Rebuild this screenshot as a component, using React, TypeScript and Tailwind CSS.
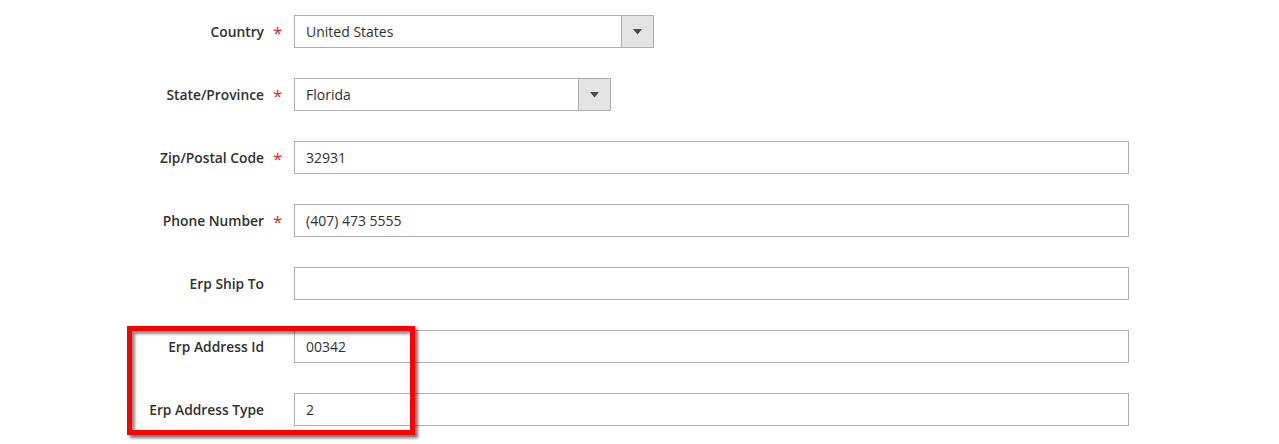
import React from "react";

const font = { fontFamily: '"Open Sans", "Noto Sans", sans-serif' };

function Row({ label, required, children }: { label: string; required?: boolean; children: React.ReactNode }) {
  return (
    <div className="flex items-center h-[33px]">
      <div className="relative w-[294px] shrink-0 h-full flex items-center justify-end pr-[30px]">
        <span className="text-[13.8px] font-semibold text-[#303030] leading-none">{label}</span>
        {required && (
          <span className="absolute left-[273px] top-[9px] text-[17px] leading-none text-[#e22626]">*</span>
        )}
      </div>
      {children}
    </div>
  );
}

function Input({ value, w }: { value: string; w: string }) {
  return (
    <div className={`${w} h-[33px] border border-[#adadad] bg-white flex items-center pl-[11px] text-[14px] text-[#303030]`}>
      {value}
    </div>
  );
}

function Select({ value, w }: { value: string; w: string }) {
  return (
    <div className={`${w} h-[33px] border border-[#adadad] bg-white flex items-stretch text-[14px] text-[#303030]`}>
      <div className="flex-1 flex items-center pl-[11px]">{value}</div>
      <div className="w-[32px] bg-[#e3e3e3] border-l border-[#adadad] flex items-center justify-center">
        <svg width="9" height="6" viewBox="0 0 9 6">
          <polygon points="0,0 9,0 4.5,5.5" fill="#514943" />
        </svg>
      </div>
    </div>
  );
}

export default function App() {
  return (
    <div className="relative w-[1279px] h-[444px] bg-white overflow-hidden" style={font}>
      <div className="flex flex-col gap-[30px] pt-[15px]">
        <Row label="Country" required>
          <Select value="United States" w="w-[360px]" />
        </Row>
        <Row label="State/Province" required>
          <Select value="Florida" w="w-[317px]" />
        </Row>
        <Row label="Zip/Postal Code" required>
          <Input value="32931" w="w-[835px]" />
        </Row>
        <Row label="Phone Number" required>
          <Input value="(407) 473 5555" w="w-[835px]" />
        </Row>
        <Row label="Erp Ship To">
          <Input value="" w="w-[835px]" />
        </Row>
        <Row label="Erp Address Id">
          <Input value="00342" w="w-[835px]" />
        </Row>
        <Row label="Erp Address Type">
          <Input value="2" w="w-[835px]" />
        </Row>
      </div>
      <div className="absolute left-[127px] top-[326px] w-[288px] h-[109px] border-[5px] border-[#ff0000] shadow-[3px_3px_3px_rgba(0,0,0,0.55),inset_3px_3px_3px_rgba(0,0,0,0.45)]" />
    </div>
  );
}
